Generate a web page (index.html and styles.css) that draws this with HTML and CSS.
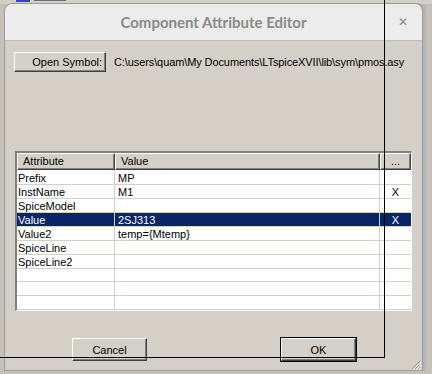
FILE: index.html
```html
<!DOCTYPE html>
<html lang="en">
<head>
    <meta charset="UTF-8">
    <meta name="viewport" content="width=device-width, initial-scale=1.0">
    <title>Component Attribute Editor</title>
    <link rel="stylesheet" href="styles.css">
</head>
<body>
    <div class="desk-top">
        <span class="desk-icon"></span>
        <span class="desk-label"></span>
    </div>
    <div class="window">
        <div class="titlebar">
            <span></span>
            <span class="title">Component Attribute Editor</span>
            <span class="close">&#x2715;</span>
        </div>
        <div class="content">
            <div class="symbol-row">
                <button class="btn btn-open">Open Symbol:</button>
                <span class="path">C:\users\quam\My Documents\LTspiceXVII\lib\sym\pmos.asy</span>
            </div>

            <div class="grid">
                <div class="row row-head">
                    <div class="head">Attribute</div>
                    <div class="head">Value</div>
                    <div class="head head-more">...</div>
                </div>
                <div class="row"><div class="cell">Prefix</div><div class="cell val">MP</div><div class="cell vis"></div></div>
                <div class="row"><div class="cell">InstName</div><div class="cell val">M1</div><div class="cell vis">X</div></div>
                <div class="row"><div class="cell">SpiceModel</div><div class="cell val"></div><div class="cell vis"></div></div>
                <div class="row sel"><div class="cell">Value</div><div class="cell val">2SJ313</div><div class="cell vis">X</div></div>
                <div class="row"><div class="cell">Value2</div><div class="cell val">temp={Mtemp}</div><div class="cell vis"></div></div>
                <div class="row"><div class="cell">SpiceLine</div><div class="cell val"></div><div class="cell vis"></div></div>
                <div class="row"><div class="cell">SpiceLine2</div><div class="cell val"></div><div class="cell vis"></div></div>
                <div class="row"><div class="cell"></div><div class="cell val"></div><div class="cell vis"></div></div>
                <div class="row"><div class="cell"></div><div class="cell val"></div><div class="cell vis"></div></div>
                <div class="row"><div class="cell"></div><div class="cell val"></div><div class="cell vis"></div></div>
            </div>

            <div class="footer">
                <button class="btn btn-cancel">Cancel</button>
                <button class="btn btn-ok">OK</button>
            </div>
        </div>
    </div>

    <div class="marquee"></div>
    <svg class="grip" width="10" height="10" viewBox="0 0 10 10">
        <path d="M9 1 L1 9 M9 4 L4 9 M9 7 L7 9" stroke="#8a8a8a" stroke-width="1"/>
        <path d="M10 2 L2 10 M10 5 L5 10 M10 8 L8 10" stroke="#ffffff" stroke-width="1"/>
    </svg>
</body>
</html>
```

FILE: styles.css
```css
body {
    margin: 0;
    width: 432px;
    height: 374px;
    overflow: hidden;
    position: relative;
    background-color: #c4c1bb;
    font-family: "Liberation Sans", Arial, sans-serif;
    font-size: 11px;
    color: #000;
}
.desk-top {
    height: 4px;
    background-color: #d4d0c8;
    display: flex;
    gap: 4px;
    padding-left: 16px;
}
.desk-icon {
    width: 14px;
    height: 2px;
    background-color: #3b3bd0;
}
.desk-label {
    width: 32px;
    height: 1px;
    background-color: #6b6b6b;
}
.window {
    margin-left: 5px;
    width: 417px;
    height: 366px;
    background-color: #d4d0c8;
    border-radius: 7px 7px 0 0;
    box-shadow: 0 0 0 1px #9b9b9b, 3px 0 0 1px #b4b4b4;
}
.titlebar {
    height: 36px;
    background-color: #ececec;
    border-bottom: 1px solid #bdbdbd;
    border-radius: 7px 7px 0 0;
    display: grid;
    grid-template-columns: 40px 1fr 40px;
    align-items: center;
}
.title {
    text-align: center;
    font-family: Lato, "Liberation Sans", sans-serif;
    font-weight: bold;
    font-size: 15px;
    color: #8a8a8a;
}
.close {
    text-align: center;
    font-family: "DejaVu Sans", sans-serif;
    font-weight: bold;
    font-size: 12px;
    color: #8a8a8a;
    padding-left: 2px;
}
.content {
    padding: 11px 9px 0 9px;
}
.symbol-row {
    display: flex;
    align-items: center;
    gap: 8px;
}
.btn {
    font-family: "Liberation Sans", Arial, sans-serif;
    font-size: 11px;
    color: #000;
    background-color: #d4d0c8;
    border: 1px solid;
    border-color: #ffffff #404040 #404040 #ffffff;
    box-shadow: inset -1px -1px 0 #808080;
    padding: 0;
}
.btn-open {
    width: 92px;
    height: 20px;
    text-align: right;
    padding-right: 3px;
}
.path {
    white-space: nowrap;
    letter-spacing: -0.1px;
}
.grid {
    margin-top: 79px;
    margin-left: 1px;
    width: 397px;
    box-sizing: border-box;
    background-color: #fff;
    border-top: 2px solid #808080;
    border-left: 2px solid #808080;
    border-right: 1px solid #ffffff;
    border-bottom: 1px solid #ffffff;
}
.row {
    display: grid;
    grid-template-columns: 98px 265px 31px;
    height: 14px;
}
.row-head {
    height: 17px;
}
.head {
    box-sizing: border-box;
    background-color: #d4d0c8;
    border-top: 1px solid #ffffff;
    border-left: 1px solid #ffffff;
    border-right: 1px solid #404040;
    border-bottom: 1px solid #404040;
    box-shadow: inset -1px -1px 0 #808080;
    padding-left: 5px;
    line-height: 15px;
}
.head-more {
    padding-left: 10px;
}
.cell {
    box-sizing: border-box;
    border-right: 1px solid #d4d0c8;
    border-bottom: 1px solid #d4d0c8;
    padding: 2px 0 0 1px;
    line-height: 12px;
    white-space: nowrap;
}
.val {
    padding-left: 3px;
}
.vis {
    text-align: center;
    padding-left: 0;
    border-right: none;
}
.sel {
    background-color: #0a246a;
    color: #fff;
}
.footer {
    margin-top: 27px;
    padding-left: 58px;
    display: flex;
    gap: 134px;
}
.btn-cancel,
.btn-ok {
    width: 75px;
    height: 23px;
}
.btn-ok {
    outline: 1px solid #000;
}
.marquee {
    position: absolute;
    left: 0;
    top: 0;
    width: 384px;
    height: 357px;
    border-right: 1px solid #000;
    border-bottom: 1px solid #000;
    pointer-events: none;
}
.grip {
    position: absolute;
    left: 411px;
    top: 360px;
}
```
